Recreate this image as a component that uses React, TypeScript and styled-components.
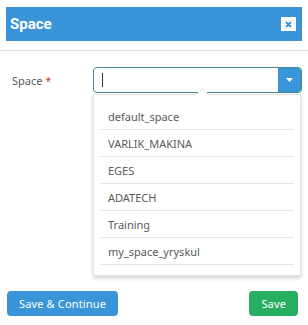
import React from "react";
import styled, { createGlobalStyle } from "styled-components";

const Global = createGlobalStyle`
  html, body { margin: 0; padding: 0; background: #fff; }
  body { font-family: "Noto Sans", "Open Sans", sans-serif; }
`;

const Modal = styled.div`
  width: 308px;
  height: 325px;
  display: flex;
  flex-direction: column;
  background: #fff;
`;

const HeaderWrap = styled.div`
  padding: 7px 6px 9px 6px;
  border-bottom: 1px solid #e2e2e2;
`;

const Header = styled.div`
  height: 34px;
  background: #3a95d8;
  display: flex;
  align-items: center;
  justify-content: space-between;
  padding: 0 6px 0 4px;
`;

const Title = styled.div`
  color: #fff;
  font-family: Roboto, "Noto Sans", sans-serif;
  font-weight: 700;
  font-size: 15px;
`;

const Close = styled.div`
  width: 15px;
  height: 14px;
  background: #fff;
  display: flex;
  align-items: center;
  justify-content: center;
`;

const Body = styled.div`
  flex: 1;
  display: flex;
  padding: 16px 6px 0 12px;
`;

const Label = styled.div`
  width: 81px;
  font-size: 11px;
  color: #5a5a5a;
  padding-top: 6px;
`;

const Star = styled.span`
  color: #c0392b;
  margin-left: 3px;
  font-size: 10px;
`;

const Field = styled.div`
  flex: 1;
  display: flex;
  flex-direction: column;
`;

const InputRow = styled.div`
  display: flex;
  height: 26px;
  border: 1px solid #4a8796;
  border-radius: 4px;
  overflow: hidden;
  box-sizing: border-box;
`;

const Input = styled.div`
  flex: 1;
  display: flex;
  align-items: center;
  padding-left: 8px;
`;

const Cursor = styled.div`
  width: 1px;
  height: 14px;
  background: #333;
`;

const DropBtn = styled.div`
  width: 23px;
  background: #3a95d8;
  display: flex;
  align-items: center;
  justify-content: center;
`;

const Menu = styled.div`
  position: relative;
  margin-top: 1px;
  margin-right: 1px;
  background: #fff;
  border: 1px solid #e4e4e4;
  box-shadow: 0 2px 4px rgba(0, 0, 0, 0.18);
  padding: 8px 6px 10px 6px;
`;

const Notch = styled.div`
  position: absolute;
  top: -5px;
  left: 104px;
  width: 8px;
  height: 8px;
  background: #fff;
  border-left: 1px solid #e4e4e4;
  border-top: 1px solid #e4e4e4;
  transform: rotate(45deg);
`;

const Item = styled.div`
  height: 26px;
  border-bottom: 1px solid #e6e6e6;
  display: flex;
  align-items: center;
  padding-left: 8px;
  font-size: 11px;
  color: #5a5a5a;
`;

const Footer = styled.div`
  display: flex;
  justify-content: space-between;
  padding: 0 10px 9px 7px;
`;

const Button = styled.button<{ $color: string }>`
  height: 25px;
  border: none;
  border-radius: 4px;
  background: ${(p) => p.$color};
  color: #fff;
  font-family: "Noto Sans", "Open Sans", sans-serif;
  font-size: 11px;
  letter-spacing: 0.15px;
  padding: 0 12px;
`;

const items = [
  "default_space",
  "VARLIK_MAKINA",
  "EGES",
  "ADATECH",
  "Training",
  "my_space_yryskul",
];

export default function App() {
  return (
    <>
      <Global />
      <Modal>
        <HeaderWrap>
          <Header>
            <Title>Space</Title>
            <Close>
              <svg width="7" height="7" viewBox="0 0 7 7">
                <path d="M1 1L6 6M6 1L1 6" stroke="#3a95d8" strokeWidth="1.8" />
              </svg>
            </Close>
          </Header>
        </HeaderWrap>
        <Body>
          <Label>
            Space<Star>*</Star>
          </Label>
          <Field>
            <InputRow>
              <Input>
                <Cursor />
              </Input>
              <DropBtn>
                <svg width="7" height="4" viewBox="0 0 7 4">
                  <path d="M0 0H7L3.5 4Z" fill="#fff" />
                </svg>
              </DropBtn>
            </InputRow>
            <Menu>
              <Notch />
              {items.map((t) => (
                <Item key={t}>{t}</Item>
              ))}
            </Menu>
          </Field>
        </Body>
        <Footer>
          <Button $color="#3a95d8">Save &amp; Continue</Button>
          <Button $color="#27ae60">Save</Button>
        </Footer>
      </Modal>
    </>
  );
}
